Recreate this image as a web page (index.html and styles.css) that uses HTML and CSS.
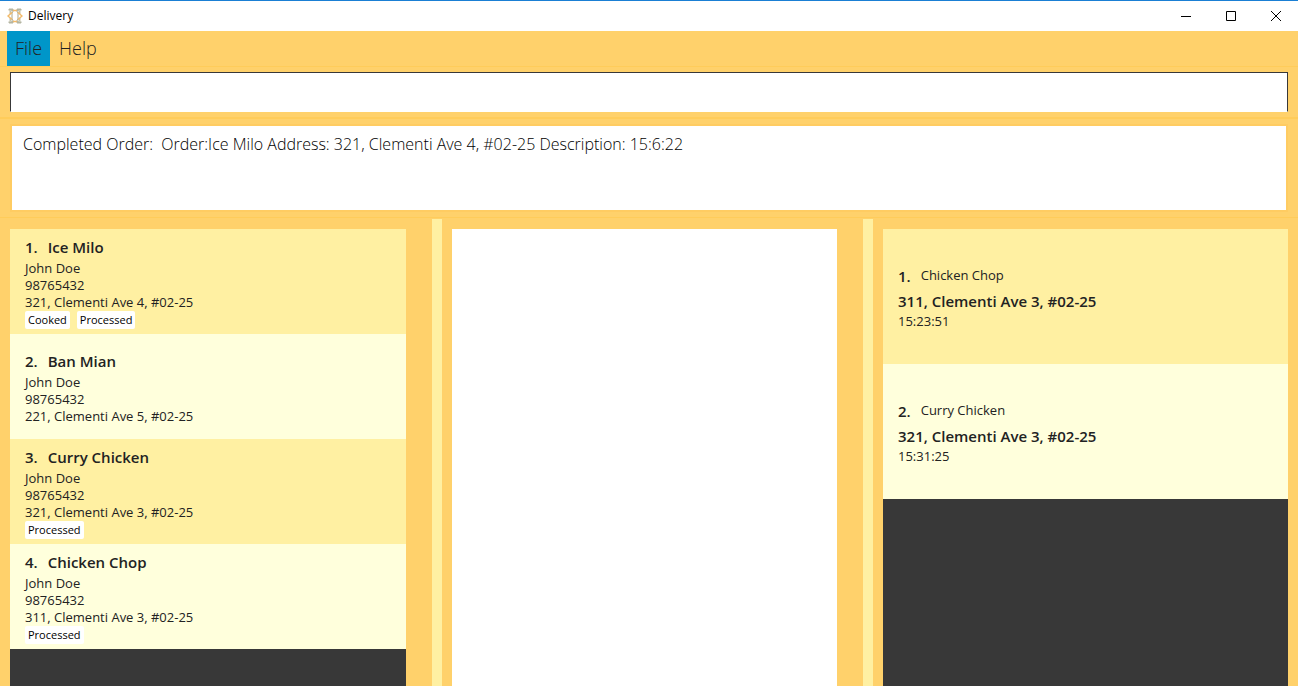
FILE: index.html
```html
<!DOCTYPE html>
<html lang="en">
<head>
<meta charset="utf-8">
<title>Delivery</title>
<link rel="stylesheet" href="styles.css">
</head>
<body>
<header class="titlebar">
  <svg class="app-icon" viewBox="0 0 16 16" aria-hidden="true">
    <path d="M2 2.500V1h4v2M10 3V1h4v1.500M2 13.500V15h4v-2M10 13v2h4v-1.500" fill="#b4b5a2" stroke="#b4b5a2" stroke-width="1"/>
    <path d="M3.500 3v3M12.500 3v3M3.500 10v3M12.500 10v3" fill="none" stroke="#c8c4aa" stroke-width="2"/>
    <path d="M6.500 2.500h3L11 5v6l-1.500 2.500h-3L5 11V5z" fill="#fff" stroke="#a9a58b" stroke-width="1"/>
    <path d="M5 4.500 1 8l4 3.500M11 4.500 15 8l-4 3.500M6 13.500h4M6 2.500h4" fill="none" stroke="#f2b968" stroke-width="1.500"/>
  </svg>
  <h1 class="app-title">Delivery</h1>
  <div class="window-controls">
    <button class="window-button" type="button" aria-label="Minimize"><svg viewBox="0 0 12 12"><path d="M1 6.500h10"/></svg></button>
    <button class="window-button" type="button" aria-label="Maximize"><svg viewBox="0 0 12 12"><path d="M1.500 1.500h9v9h-9z"/></svg></button>
    <button class="window-button" type="button" aria-label="Close"><svg viewBox="0 0 12 12"><path d="m1 1 10 10M11 1 1 11"/></svg></button>
  </div>
</header>
<nav class="menubar">
  <button class="menu menu-open" type="button">File</button>
  <button class="menu" type="button">Help</button>
</nav>
<section class="command">
  <input class="command-box" type="text" aria-label="Command">
</section>
<section class="result">
  <output class="result-box">Completed Order:  Order:Ice Milo Address: 321, Clementi Ave 4, #02-25 Description: 15:6:22</output>
</section>
<main class="panes">
  <section class="pane">
    <ol class="list">
      <li class="card">
        <h2 class="heading"><span class="index">1.</span>Ice Milo</h2>
        <p class="line">John Doe</p>
        <p class="line">98765432</p>
        <p class="line">321, Clementi Ave 4, #02-25</p>
        <div class="tags"><span class="tag">Cooked</span><span class="tag">Processed</span></div>
      </li>
      <li class="card">
        <h2 class="heading"><span class="index">2.</span>Ban Mian</h2>
        <p class="line">John Doe</p>
        <p class="line">98765432</p>
        <p class="line">221, Clementi Ave 5, #02-25</p>
      </li>
      <li class="card">
        <h2 class="heading"><span class="index">3.</span>Curry Chicken</h2>
        <p class="line">John Doe</p>
        <p class="line">98765432</p>
        <p class="line">321, Clementi Ave 3, #02-25</p>
        <div class="tags"><span class="tag">Processed</span></div>
      </li>
      <li class="card">
        <h2 class="heading"><span class="index">4.</span>Chicken Chop</h2>
        <p class="line">John Doe</p>
        <p class="line">98765432</p>
        <p class="line">311, Clementi Ave 3, #02-25</p>
        <div class="tags"><span class="tag">Processed</span></div>
      </li>
    </ol>
  </section>
  <div class="divider"></div>
  <section class="pane">
    <div class="browser"></div>
  </section>
  <div class="divider"></div>
  <section class="pane pane-last">
    <ol class="list">
      <li class="card task">
        <p class="heading"><span class="index">1.</span><span class="line">Chicken Chop</span></p>
        <h2 class="heading">311, Clementi Ave 3, #02-25</h2>
        <p class="line">15:23:51</p>
      </li>
      <li class="card task">
        <p class="heading"><span class="index">2.</span><span class="line">Curry Chicken</span></p>
        <h2 class="heading">321, Clementi Ave 3, #02-25</h2>
        <p class="line">15:31:25</p>
      </li>
    </ol>
  </section>
</main>
</body>
</html>
```
FILE: styles.css
```css
* { box-sizing: border-box; }

body {
  margin: 0;
  height: 100vh;
  display: flex;
  flex-direction: column;
  overflow: hidden;
  background: #ffd16b;
  color: #222;
  font-family: "Open Sans", "Noto Sans", sans-serif;
}

h1, h2, p, ol { margin: 0; padding: 0; }

button { border: 0; background: none; font: inherit; color: inherit; }

.titlebar {
  display: flex;
  align-items: center;
  height: 31px;
  padding-left: 7px;
  border-top: 1px solid #1a7fd4;
  background: #fff;
  color: #000;
}

.app-icon { width: 16px; height: 16px; }

.app-title {
  margin-left: 5px;
  font-size: 12px;
  font-weight: 400;
  line-height: 16px;
}

.window-controls { display: flex; margin-left: auto; height: 100%; }

.window-button {
  display: grid;
  place-items: center;
  width: 45px;
  padding: 0;
}

.window-button svg {
  width: 12px;
  height: 12px;
  fill: none;
  stroke: #000;
}

.menubar {
  display: flex;
  height: 36px;
  padding-left: 7px;
  border-bottom: 1px solid #ffcc5a;
}

.menu {
  height: 35px;
  padding: 0 8px;
  font-size: 18px;
  font-weight: 300;
  line-height: 35px;
}

.menu + .menu { margin-left: 1px; }

.menu-open { background: #0096c9; }

.command {
  padding: 5px 10px;
  border-bottom: 2px solid #ffcc5a;
}

.command-box {
  display: block;
  width: 100%;
  height: 40px;
  padding: 0 10px;
  border: 1px solid #383838;
  border-bottom-color: #fff;
  border-radius: 0;
  background: #fff;
  font: 300 16px "Open Sans", sans-serif;
  outline: 0;
}

.result {
  padding: 5px 10px;
  border-bottom: 1px solid #ffcc5a;
}

.result-box {
  display: block;
  height: 88px;
  padding: 6px 11px;
  border: 2px solid #ffcc62;
  background: #fff;
  color: #000;
  font-size: 16px;
  font-weight: 300;
  line-height: 24px;
  white-space: pre-wrap;
}

.panes {
  flex: 1;
  display: grid;
  grid-template-columns: 432fr 10px 421fr 10px 425fr;
  min-height: 0;
  padding-top: 1px;
}

.divider { background: #fff0a2; }

.pane { display: flex; min-width: 0; padding: 10px 26px 0 10px; }

.pane-last { padding-right: 10px; }

.browser { flex: 1; background: #fff; }

.list {
  flex: 1;
  list-style: none;
  background: #383838;
}

.card {
  display: flex;
  flex-direction: column;
  justify-content: center;
  min-height: 105px;
  padding: 0 15px;
  background: #fff0a2;
}

.card:nth-child(even) { background: #ffffdc; }

.task { min-height: 135px; }

.heading {
  display: flex;
  align-items: center;
  height: 25px;
  font-size: 15px;
  font-weight: 600;
  line-height: 24px;
}

.index { margin-right: 10px; }

.line {
  font-size: 13px;
  font-weight: 400;
  line-height: 17px;
}

.tags { display: flex; gap: 7px; }

.tag {
  padding: 0 3px;
  border-radius: 2px;
  background: #fff;
  color: #000;
  font-size: 11px;
  line-height: 18px;
}
```
